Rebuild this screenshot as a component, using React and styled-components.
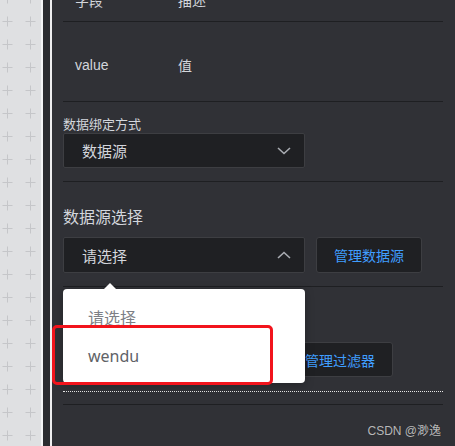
import React from "react";
import styled, { createGlobalStyle } from "styled-components";

const GlobalStyle = createGlobalStyle`
  html, body {
    margin: 0;
    padding: 0;
    width: 455px;
    height: 446px;
    overflow: hidden;
    background: #303136;
  }
  body {
    font-family: "Liberation Sans", "Noto Sans CJK SC", sans-serif;
  }
  * { box-sizing: border-box; }
`;

const Shell = styled.div`
  display: flex;
  width: 455px;
  height: 446px;
`;

const Canvas = styled.div`
  flex: none;
  width: 41px;
  height: 100%;
  background: #dfe0e2;

  & svg {
    display: block;
  }
`;

const Splitter = styled.div`
  flex: none;
  width: 11px;
  height: 100%;
  background: #2b2c30;
  border-left: 2px solid #f4f4f5;
  border-right: 2px solid #eeeeef;
`;

const Panel = styled.div`
  position: relative;
  flex: 1;
  display: flex;
  flex-direction: column;
  padding: 0 12px 0 11px;
  background: #303136;
  color: #cfd3da;
  overflow: hidden;
`;

const TableRow = styled.div`
  display: grid;
  grid-template-columns: 103px 1fr;
  align-items: center;
  height: ${(p) => p.$h}px;
  margin-top: ${(p) => p.$mt || 0}px;
  padding-top: ${(p) => p.$pt || 0}px;
  border-bottom: 1px solid #1e1f22;
  font-size: 14px;
  color: #d3d6dc;

  & span {
    padding-left: 12px;
  }
`;

const Section = styled.div`
  position: relative;
  display: flex;
  flex-direction: column;
  padding-top: ${(p) => p.$pt}px;
  padding-bottom: ${(p) => p.$pb}px;
  border-bottom: 1px ${(p) => (p.$dotted ? "dotted #e6e6e6" : "solid #1e1f22")};
`;

const Label = styled.div`
  font-size: ${(p) => (p.$big ? 16 : 13)}px;
  line-height: ${(p) => (p.$big ? 22 : 18)}px;
  margin-bottom: ${(p) => p.$mb || 0}px;
  color: #d3d6dc;
  font-family: "Noto Sans CJK SC", sans-serif;
`;

const Row = styled.div`
  display: flex;
  gap: 11px;
`;

const SelectWrap = styled.div`
  position: relative;
  width: ${(p) => p.$w}px;
`;

const Select = styled.div`
  display: flex;
  align-items: center;
  justify-content: space-between;
  height: ${(p) => p.$h}px;
  padding: 0 13px 0 18px;
  background: #1f2023;
  border: 1px solid #3d3e42;
  border-radius: 2px;
  font-size: 15px;
  color: #d3d6dc;
  font-family: "Noto Sans CJK SC", sans-serif;

  & svg {
    display: block;
  }
`;

const Button = styled.div`
  display: flex;
  align-items: center;
  justify-content: center;
  height: ${(p) => p.$h}px;
  padding: 0 17px;
  background: #1f2023;
  border: 1px solid #3d3e42;
  border-radius: 3px;
  font-size: 14px;
  color: #409eff;
  font-family: "Noto Sans CJK SC", sans-serif;
`;

const Popup = styled.div`
  position: absolute;
  top: calc(100% + 16px);
  left: 0;
  z-index: 5;
  width: 242px;
  padding: 8px 0;
  background: #ffffff;
  border-radius: 4px;
  box-shadow: 0 2px 10px rgba(0, 0, 0, 0.25);

  &::before {
    content: "";
    position: absolute;
    top: -6px;
    left: 41px;
    border-left: 6px solid transparent;
    border-right: 6px solid transparent;
    border-bottom: 6px solid #ffffff;
  }
`;

const Option = styled.div`
  display: flex;
  align-items: center;
  height: 39px;
  padding-left: 25px;
  font-size: 16px;
  color: ${(p) => (p.$muted ? "#7d8086" : "#606266")};
  font-family: ${(p) =>
    p.$latin ? '"Noto Sans", "Liberation Sans", sans-serif' : '"Noto Sans CJK SC", sans-serif'};
`;

const Mark = styled.div`
  position: absolute;
  left: 0;
  top: 325px;
  z-index: 6;
  width: 221px;
  height: 60px;
  border: 3px solid #f2141c;
  border-radius: 5px;
  pointer-events: none;
`;

const Watermark = styled.div`
  position: absolute;
  right: 14px;
  bottom: 8px;
  font-size: 12px;
  color: rgba(235, 235, 235, 0.75);
  font-family: "Liberation Sans", "Noto Sans CJK SC", sans-serif;
  text-shadow: 0 0 1px rgba(0, 0, 0, 0.4);
`;

function Chevron({ up }) {
  return (
    <svg width="14" height="8" viewBox="0 0 14 8">
      <polyline
        points={up ? "1,7 7,1.5 13,7" : "1,1 7,6.5 13,1"}
        fill="none"
        stroke="#a9acb2"
        strokeWidth="1.6"
      />
    </svg>
  );
}

function Grid() {
  return (
    <svg width="41" height="446">
      <g stroke="#c5c6c9" strokeWidth="1">
        {Array.from({ length: 21 }).map((_, i) => {
          const y = 21 + (i - 1) * 23 + 0.5;
          return (
            <g key={i}>
              <path d={`M2.5 ${y}h10M7.5 ${y - 5}v10`} />
              <path d={`M25.5 ${y}h10M30.5 ${y - 5}v10`} />
            </g>
          );
        })}
      </g>
    </svg>
  );
}

export default function App() {
  return (
    <>
      <GlobalStyle />
      <Shell>
        <Canvas>
          <Grid />
        </Canvas>
        <Splitter />
        <Panel>
          <TableRow $h={43} $mt={-21}>
            <span>字段</span>
            <span>描述</span>
          </TableRow>
          <TableRow $h={80} $pt={6}>
            <span>value</span>
            <span>值</span>
          </TableRow>

          <Section $pt={13} $pb={13}>
            <Label>数据绑定方式</Label>
            <SelectWrap $w={242}>
              <Select $h={35}>
                <span>数据源</span>
                <Chevron />
              </Select>
            </SelectWrap>
          </Section>

          <Section $pt={23} $pb={13}>
            <Label $big $mb={10}>
              数据源选择
            </Label>
            <Row>
              <SelectWrap $w={242}>
                <Select $h={36}>
                  <span>请选择</span>
                  <Chevron up />
                </Select>
                <Popup>
                  <Option $muted>请选择</Option>
                  <Option $latin>wendu</Option>
                </Popup>
              </SelectWrap>
              <Button $h={36}>管理数据源</Button>
            </Row>
          </Section>

          <Section $pt={23} $pb={14} $dotted>
            <Label $big $mb={10}>
              数据过滤
            </Label>
            <Row>
              <SelectWrap $w={213}>
                <Select $h={35}>
                  <span>请选择</span>
                  <Chevron />
                </Select>
              </SelectWrap>
              <Button $h={35}>管理过滤器</Button>
            </Row>
          </Section>
          <Section $pt={12} $pb={0} />

          <Mark />
          <Watermark>CSDN @渺逸</Watermark>
        </Panel>
      </Shell>
    </>
  );
}
